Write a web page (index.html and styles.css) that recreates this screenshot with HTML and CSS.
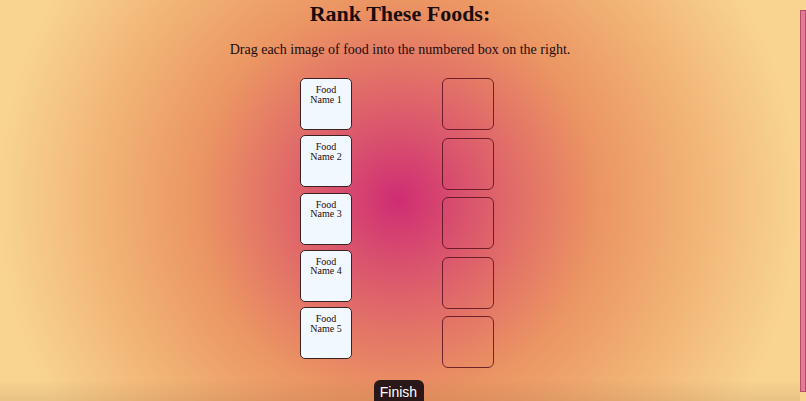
FILE: index.html
```html
<!DOCTYPE html>
<html lang="en">
<head>
    <meta charset="UTF-8">
    <meta name="viewport" content="width=device-width, initial-scale=1.0">
    <title>Rank These Foods</title>
    <link rel="stylesheet" href="styles.css">
</head>
<body>
    <h1>Rank These Foods:</h1>
    <p class="instructions">Drag each image of food into the numbered box on the right.</p>

    <div class="board">
        <div class="food-list">
            <div class="food-card" draggable="true">Food Name 1</div>
            <div class="food-card" draggable="true">Food Name 2</div>
            <div class="food-card" draggable="true">Food Name 3</div>
            <div class="food-card" draggable="true">Food Name 4</div>
            <div class="food-card" draggable="true">Food Name 5</div>
        </div>
        <div class="rank-list">
            <div class="rank-slot"></div>
            <div class="rank-slot"></div>
            <div class="rank-slot"></div>
            <div class="rank-slot"></div>
            <div class="rank-slot"></div>
        </div>
    </div>

    <div class="footer">
        <button class="finish">Finish</button>
    </div>

    <!-- side strip -->
    <div class="side-strip"></div>
</body>
</html>
```

FILE: styles.css
```css
html, body {
    height: 100%;
}
body {
    font-family: "Palatino Linotype", Palatino, "Book Antiqua", "Liberation Serif", serif;
    color: #1a0c0c;
    margin: 0;
    padding: 0 6px 0 0;
    overflow: hidden;
    background: radial-gradient(circle at 398px 200px, #cf2d73 0, #da546d 70px, #e47866 140px, #eb9563 200px, #f1b274 290px, #f8d490 400px);
}

h1 {
    text-align: center;
    font-size: 22px;
    margin: 0;
    padding-top: 2px;
    line-height: 24px;
}

.instructions {
    text-align: center;
    font-size: 14px;
    margin: 15px 0 0 0;
    line-height: 17px;
}

.board {
    display: flex;
    justify-content: center;
    gap: 90px;
    margin: 20px 6px 0 0;
}

.food-list {
    display: flex;
    flex-direction: column;
    gap: 5.25px;
}
.food-card {
    width: 36px;
    height: 44px;
    background-color: #f2f8ff;
    border: 1px solid #3a2222;
    border-radius: 5px;
    text-align: center;
    font-size: 10px;
    line-height: 9.5px;
    padding: 6px 7px 0 7px;
}

.rank-list {
    display: flex;
    flex-direction: column;
    gap: 7.5px;
}
.rank-slot {
    width: 50px;
    height: 50px;
    border: 1px solid rgba(90, 18, 30, 0.85);
    border-radius: 6px;
}

.footer {
    position: fixed;
    left: 0;
    right: 6px;
    bottom: 0;
    height: 21px;
    display: flex;
    justify-content: center;
    background: linear-gradient(to bottom, rgba(120, 70, 40, 0), rgba(120, 70, 40, 0.12));
}
.finish {
    font-family: "Liberation Sans", Arial, sans-serif;
    font-size: 14px;
    color: #fff;
    background-color: #2a1818;
    border: none;
    border-radius: 6px 6px 0 0;
    width: 50px;
    height: 24px;
    padding: 0;
    margin-left: -3px;
    align-self: flex-start;
    line-height: 22px;
}

.side-strip {
    position: fixed;
    top: 10px;
    bottom: 9px;
    right: 0;
    width: 4px;
    background-color: #e27b98;
    border: 1px solid #b54c6a;
}
```
